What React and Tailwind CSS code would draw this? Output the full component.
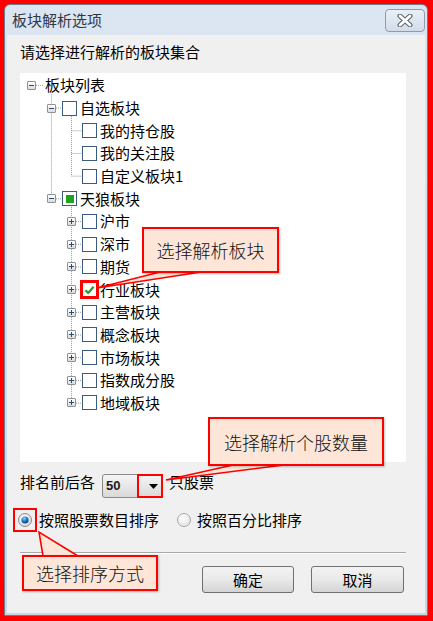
import React from "react";

const rows = [
  { lvl: 0, exp: "minus", text: "板块列表" },
  { lvl: 1, exp: "minus", check: "empty", text: "自选板块" },
  { lvl: 2, check: "empty", text: "我的持仓股" },
  { lvl: 2, check: "empty", text: "我的关注股" },
  { lvl: 2, check: "empty", text: "自定义板块1" },
  { lvl: 1, exp: "minus", check: "partial", text: "天狼板块" },
  { lvl: 2, exp: "plus", check: "empty", text: "沪市" },
  { lvl: 2, exp: "plus", check: "empty", text: "深市" },
  { lvl: 2, exp: "plus", check: "empty", text: "期货" },
  { lvl: 2, exp: "plus", check: "checked", mark: true, text: "行业板块" },
  { lvl: 2, exp: "plus", check: "empty", text: "主营板块" },
  { lvl: 2, exp: "plus", check: "empty", text: "概念板块" },
  { lvl: 2, exp: "plus", check: "empty", text: "市场板块" },
  { lvl: 2, exp: "plus", check: "empty", text: "指数成分股" },
  { lvl: 2, exp: "plus", check: "empty", text: "地域板块" },
];

const indent = { 0: "pl-[7px]", 1: "pl-[27px]", 2: "pl-[47px]" };
const ROW = 22.7;
const cy = (i) => 1 + ROW * i + ROW / 2;

function Expander({ type }) {
  return (
    <span className="relative flex h-[9px] w-[9px] shrink-0 items-center justify-center rounded-[1px] border border-[#919191] bg-linear-to-b from-white to-[#dcdcdc]">
      <span className="absolute h-px w-[5px] bg-[#2f4a73]" />
      {type === "plus" ? <span className="absolute h-[5px] w-px bg-[#2f4a73]" /> : null}
    </span>
  );
}

function Check({ state, mark }) {
  return (
    <span
      className={
        mark
          ? "flex h-[15px] w-[15px] shrink-0 items-center justify-center border border-[#ff0000] bg-white outline-2 outline-[#ff0000]"
          : "flex h-[15px] w-[15px] shrink-0 items-center justify-center border border-[#3a5a82] bg-white"
      }
    >
      {state === "partial" ? <span className="h-[8px] w-[8px] bg-[#1fa31f]" /> : null}
      {state === "checked" ? (
        <svg width="11" height="10" viewBox="0 0 11 10">
          <path d="M1.5 5.2 L4.2 8 L9.6 1.8" fill="none" stroke="#2a9d2a" strokeWidth="2.3" strokeLinejoin="round" />
        </svg>
      ) : null}
    </span>
  );
}

function TreeLines() {
  const dot = { stroke: "#9a9a9a", strokeWidth: 1, strokeDasharray: "1 1" };
  return (
    <svg className="pointer-events-none absolute inset-0" width="386" height="389">
      <line x1="16" x2="24" y1={cy(0)} y2={cy(0)} {...dot} />
      <line x1="31.5" x2="31.5" y1={cy(0) + 9} y2={cy(5)} {...dot} />
      <line x1="36" x2="42" y1={cy(1)} y2={cy(1)} {...dot} />
      <line x1="36" x2="42" y1={cy(5)} y2={cy(5)} {...dot} />
      <line x1="51.5" x2="51.5" y1={cy(1) + 8} y2={cy(4)} {...dot} />
      {[2, 3, 4].map((i) => (
        <line key={i} x1="51.5" x2="62" y1={cy(i)} y2={cy(i)} {...dot} />
      ))}
      <line x1="51.5" x2="51.5" y1={cy(5) + 8} y2={cy(14)} {...dot} />
      {[6, 7, 8, 9, 10, 11, 12, 13, 14].map((i) => (
        <line key={i} x1="56" x2="62" y1={cy(i)} y2={cy(i)} {...dot} />
      ))}
    </svg>
  );
}

function Radio({ on }) {
  return (
    <svg width="14" height="14" viewBox="0 0 14 14" className="shrink-0">
      <defs>
        <radialGradient id={on ? "rg-on" : "rg-off"} cx="0.4" cy="0.35" r="0.7">
          <stop offset="0" stopColor="#ffffff" />
          <stop offset="1" stopColor={on ? "#d6d6d6" : "#e2e2e2"} />
        </radialGradient>
        <radialGradient id="rg-dot" cx="0.4" cy="0.3" r="0.7">
          <stop offset="0" stopColor="#8fd3ff" />
          <stop offset="0.5" stopColor="#1f7fd0" />
          <stop offset="1" stopColor="#0b3f7e" />
        </radialGradient>
      </defs>
      <circle cx="7" cy="7" r="6.5" fill={on ? "url(#rg-on)" : "url(#rg-off)"} stroke={on ? "#8a8a8a" : "#a4a4a4"} />
      {on ? <circle cx="7" cy="7" r="3.6" fill="url(#rg-dot)" /> : null}
    </svg>
  );
}

function Callout({ className, children }) {
  return (
    <div
      className={
        "absolute flex items-center justify-center border-2 border-[#ff0000] bg-[#fde6d8] text-[18px] font-light leading-none text-[#111] shadow-[1px_1px_2px_rgba(0,0,0,0.25)] " +
        className
      }
    >
      {children}
    </div>
  );
}

export default function App() {
  return (
    <div className="relative h-[621px] w-[433px] bg-[#ff0000] pb-[5px] pl-[4px] pr-[5px] pt-[4px] font-['Noto_Sans_CJK_SC',sans-serif] text-[15px] text-black">
      <div className="flex h-full flex-col rounded-t-[6px] border border-[#6f7b89] bg-linear-to-b from-[#dce6f2] to-[#c8d6e8]">
        <div className="flex h-[30px] shrink-0 items-center justify-between pl-[7px] pr-[2px]">
          <span className="leading-[20px] text-[#2e3744]">板块解析选项</span>
          <button
            type="button"
            className="flex h-[23px] w-[40px] items-center justify-center rounded-[4px] border border-[#8f9bab] bg-linear-to-b from-[#eaf0f7] to-[#d2dce8]"
          >
            <svg width="16" height="13" viewBox="0 0 16 13">
              <path d="M3 2 L13 11 M13 2 L3 11" stroke="#5d6673" strokeWidth="5" strokeLinecap="round" />
              <path d="M3 2 L13 11 M13 2 L3 11" stroke="#ffffff" strokeWidth="2.8" strokeLinecap="round" />
            </svg>
          </button>
        </div>

        <div className="mx-[2px] mb-[2px] flex flex-1 flex-col bg-[#f0f0f0] pl-[13px] pr-[19px] pt-[7px]">
          <div className="leading-[20px]">请选择进行解析的板块集合</div>

          <div className="relative mt-[11px] h-[389px] bg-white pt-[1px]">
            <TreeLines />
            {rows.map((r) => (
              <div key={r.text} className={"relative flex h-[22.7px] items-center " + indent[r.lvl]}>
                {r.exp ? <Expander type={r.exp} /> : r.lvl === 2 ? <span className="w-[9px] shrink-0" /> : null}
                {r.lvl === 0 ? (
                  <span className="ml-[9px] leading-[20px]">{r.text}</span>
                ) : (
                  <>
                    <span className="w-[6px] shrink-0" />
                    <Check state={r.check} mark={r.mark} />
                    <span className="ml-[3px] leading-[20px]">{r.text}</span>
                  </>
                )}
              </div>
            ))}
          </div>

          <div className="mt-[10px] flex items-start">
            <span className="leading-[20px]">排名前后各</span>
            <div className="relative ml-[7px] mt-[2px] flex h-[24px] w-[61px] items-center rounded-[3px] border border-[#8a8a8a] bg-linear-to-b from-[#f5f5f5] to-[#d9d9d9] pl-[3px]">
              <span className="font-['Liberation_Sans',sans-serif] text-[13px] font-semibold text-[#1a1a1a]">50</span>
              <svg className="absolute right-[4px] top-[9px]" width="9" height="5" viewBox="0 0 9 5">
                <path d="M0 0 L9 0 L4.5 5 Z" fill="#000" />
              </svg>
              <span className="absolute -bottom-px -right-px -top-px w-[26px] border-2 border-[#ff0000]" />
            </div>
            <span className="ml-[6px] leading-[20px]">只股票</span>
          </div>

          <div className="-ml-[2px] mt-[10px] flex h-[24px] items-center">
            <span className="relative flex">
              <Radio on />
              <span className="absolute -inset-[5px] border-2 border-[#ff0000]" />
            </span>
            <span className="ml-[7px] leading-[20px]">按照股票数目排序</span>
            <span className="ml-[18px] flex">
              <Radio />
            </span>
            <span className="ml-[6px] leading-[20px]">按照百分比排序</span>
          </div>

          <div className="mt-[20px] h-px bg-[#a8a8a8]" />
          <div className="h-px bg-white" />

          <div className="mt-[12px] flex justify-end gap-[17px] pr-[2px]">
            <button
              type="button"
              className="flex h-[27px] w-[92px] items-center justify-center rounded-[3px] border border-[#707070] bg-linear-to-b from-[#f3f3f3] via-[#e9e9e9] to-[#d4d4d4] leading-[20px]"
            >
              确定
            </button>
            <button
              type="button"
              className="flex h-[27px] w-[93px] items-center justify-center rounded-[3px] border border-[#707070] bg-linear-to-b from-[#f3f3f3] via-[#e9e9e9] to-[#d4d4d4] leading-[20px]"
            >
              取消
            </button>
          </div>
        </div>
      </div>

      <svg className="pointer-events-none absolute inset-0" width="433" height="621">
        <polygon points="160,272 201,272 97,288" fill="#fde6d8" stroke="#ff0000" strokeWidth="1.6" />
        <polygon points="233,465 284,465 166,480" fill="#fde6d8" stroke="#ff0000" strokeWidth="1.6" />
        <polygon points="43,556 78,556 39,532" fill="#fde6d8" stroke="#ff0000" strokeWidth="1.6" />
      </svg>

      <Callout className="left-[142px] top-[227px] h-[46px] w-[137px]">选择解析板块</Callout>
      <Callout className="left-[208px] top-[417px] h-[49px] w-[176px]">选择解析个股数量</Callout>
      <Callout className="left-[22px] top-[555px] h-[36px] w-[136px]">选择排序方式</Callout>
    </div>
  );
}
